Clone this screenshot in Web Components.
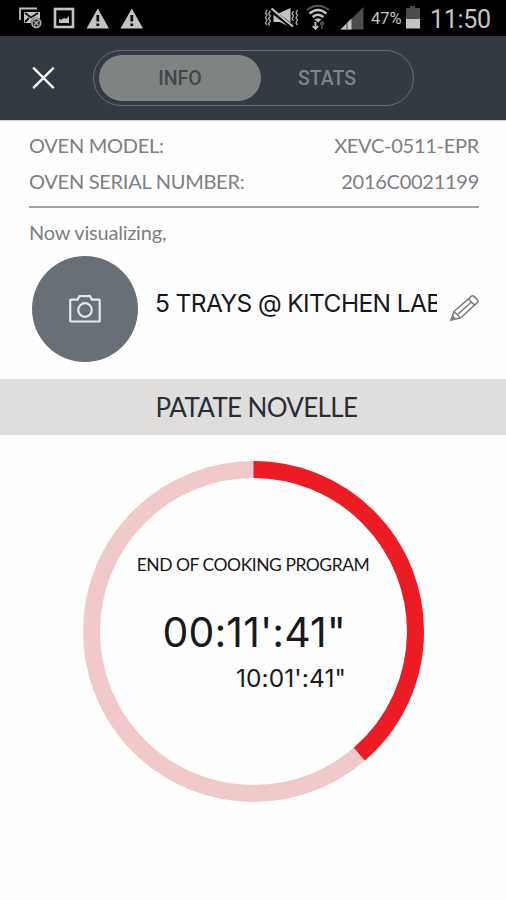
<!DOCTYPE html>
<html lang="en">
<head>
<meta charset="utf-8">
<meta name="viewport" content="width=device-width, initial-scale=1">
<title>Oven info</title>
<style>
  body {
    margin: 0;
    background: #fefefe;
    font-family: Lato, sans-serif;
  }
</style>
</head>
<body>
<oven-app></oven-app>

<script>
  function attach(element, html) {
    const template = document.createElement("template");
    template.innerHTML = html;
    element.attachShadow({ mode: "open" }).appendChild(template.content.cloneNode(true));
  }

  class StatusBar extends HTMLElement {
    constructor() {
      super();
      attach(this, `
        <style>
          :host {
            display: flex;
            justify-content: space-between;
            box-sizing: border-box;
            height: 36px;
            padding: 0 15px 0 19px;
            background: #000;
            color: #c4c4c4;
            font-family: Roboto, sans-serif;
          }
          div { display: flex; align-items: center; }
          svg { display: block; flex: none; }
          .battery { font-size: 16.5px; margin: 1px 0 0 7px; width: 34px; white-space: nowrap; }
          .clock { font-size: 25px; letter-spacing: -0.3px; margin: 2px 0 0 9px; width: 61px; white-space: nowrap; }
        </style>
        <div>
          <svg width="130" height="36" viewBox="19 0 130 36">
            <path d="M20 20V8.5h17" fill="none" stroke="#bdbdbd" stroke-width="1.8"/>
            <path d="M24 12h16v11H24z" fill="#c4c4c4"/>
            <path d="M25 13l6 4.5 7-4.5M25 22l4-4" fill="none" stroke="#111" stroke-width="1.8"/>
            <circle cx="36.3" cy="23" r="5.5" fill="#292929"/>
            <circle cx="36.3" cy="23" r="4.4" fill="#292929" stroke="#a8a8a8" stroke-width="1.6"/>
            <path d="M34 20.7l4.5 4.5m0-4.5L34 25.2" stroke="#a8a8a8" stroke-width="1.4"/>
            <rect x="55" y="9" width="18" height="18" fill="none" stroke="#c4c4c4" stroke-width="2.6"/>
            <path d="M59 23v-4l2 1 3-2 2 1 3-3v7z" fill="#c4c4c4"/>
            <path d="M97.8 8.5L109 28.5H86.5z" fill="#c4c4c4"/>
            <path d="M97.8 15v6.5m0 2v2.5" stroke="#111" stroke-width="2.8"/>
            <path d="M131.8 8.5L143 28.5h-22.5z" fill="#c4c4c4"/>
            <path d="M131.8 15v6.5m0 2v2.5" stroke="#111" stroke-width="2.8"/>
          </svg>
        </div>
        <div>
          <svg width="100" height="36" viewBox="263.5 0 100 36">
            <path d="M273 13h6l11-5v19l-11-5h-6z" fill="#c4c4c4"/>
            <path d="M271 10.5l22 17" stroke="#000" stroke-width="4.5"/>
            <path d="M271 8.5l21.5 18" stroke="#c4c4c4" stroke-width="2.2"/>
            <path d="M270 11l-2 2.5 2 2.5-2 2.5 2 2.5-2 2.5 1 2M266.5 10l-1.5 3 1.5 2-1.5 3 1.5 2-1.5 3 1.5 2M293 11l-1.5 2.5 1.5 2.5-1.5 2.5 1.5 2.5M297 10l-1.5 3 1.5 2-1.5 3 1.5 2-1.5 3 1.5 2" fill="none" stroke="#aaa" stroke-width="1.3"/>
            <path d="M306.5 10Q317.5 1.5 328.5 10" fill="none" stroke="#555" stroke-width="2"/>
            <path d="M309 13.5q8.5-7 17 0M312 17q5.5-4.5 11 0" fill="none" stroke="#c4c4c4" stroke-width="2.3"/>
            <path d="M314 19.5q3.5-2 7 0l-3.5 3z" fill="#c4c4c4"/>
            <path d="M315 22v7m-2.7-3l2.7 3 2.7-3" fill="none" stroke="#c4c4c4" stroke-width="1.8"/>
            <path d="M321.5 29v-7m-2 2.5l2-2.5 2 2.5" fill="none" stroke="#555" stroke-width="1.6"/>
            <path d="M340 29.5L363 7v22.5z" fill="#4c4c4c"/>
            <path d="M340 29.5l11-11v11z" fill="#c4c4c4"/>
            <path d="M346.5 22v7.5" stroke="#444" stroke-width="1"/>
          </svg>
          <span class="battery">47%</span>
          <svg width="16" height="36" viewBox="0 0 16 36">
            <path d="M1 8h4V6h5v2h5v11H1z" fill="#4b4b4b"/>
            <path d="M1 19h14v9.5H1z" fill="#c4c4c4"/>
          </svg>
          <span class="clock">11:50</span>
        </div>
      `);
    }
  }

  class TabSwitch extends HTMLElement {
    constructor() {
      super();
      attach(this, `
        <style>
          :host {
            display: grid;
            grid-template-columns: 162px 1fr;
            box-sizing: border-box;
            width: 321px;
            height: 56px;
            padding: 4px 4px 4px 5px;
            border: 1.5px solid #666d73;
            border-radius: 28px;
            font: 500 19.5px Roboto, sans-serif;
          }
          span { display: flex; align-items: center; justify-content: center; }
          .active { background: #7f8381; border-radius: 23px; color: #42474b; }
          .other { color: #7e8386; padding-right: 16px; }
        </style>
        <span class="active"><slot name="active"></slot></span>
        <span class="other"><slot name="other"></slot></span>
      `);
    }
  }

  class AppHeader extends HTMLElement {
    constructor() {
      super();
      attach(this, `
        <style>
          :host {
            display: flex;
            align-items: center;
            box-sizing: border-box;
            height: 84px;
            padding: 0 0 0 32px;
            background: #333a42;
          }
          svg { display: block; margin-right: 38px; }
        </style>
        <svg width="23" height="24" viewBox="0 0 23 24">
          <path d="M1.2 1.7l20.5 20.5m0-20.5L1.2 22.2" stroke="#f5f8ff" stroke-width="2.4"/>
        </svg>
        <slot></slot>
      `);
    }
  }

  class InfoRow extends HTMLElement {
    constructor() {
      super();
      attach(this, `
        <style>
          :host {
            display: flex;
            justify-content: space-between;
            height: 36px;
            line-height: 36px;
            font-size: 20px;
            letter-spacing: -0.27px;
            color: #7c7f83;
          }
        </style>
        <slot name="label"></slot>
        <slot name="value"></slot>
      `);
    }
  }

  class OvenName extends HTMLElement {
    constructor() {
      super();
      attach(this, `
        <style>
          :host { display: flex; align-items: center; height: 106px; padding-left: 3px; }
          .photo {
            display: grid;
            place-items: center;
            flex: none;
            width: 106px;
            height: 106px;
            border-radius: 50%;
            background: #696f77;
          }
          svg { display: block; flex: none; }
          .name {
            flex: none;
            width: 282px;
            margin: 0 13px 12px 17px;
            overflow: hidden;
            white-space: nowrap;
            font: 24.5px/34px Inter, sans-serif;
            letter-spacing: -0.6px;
            color: #17181a;
          }
          .edit { margin-bottom: 2px; }
        </style>
        <div class="photo">
          <svg width="32" height="28" viewBox="0 0 32 28" fill="none" stroke="#e4e7e9" stroke-width="2.2">
            <path d="M2 4.7h6.5l2-3.5h10.5l2 3.5H30q.7 0 .7.7v20.3q0 .8-.8.8H2q-.8 0-.8-.8V5.5q0-.8.8-.8z"/>
            <circle cx="16" cy="15" r="6.8"/>
          </svg>
        </div>
        <div class="name"><slot></slot></div>
        <svg class="edit" width="30" height="28" viewBox="0 0 30 28" fill="none" stroke="#7c7f82" stroke-width="1.6" stroke-linejoin="round">
          <path d="M1 26l3-8.5L21.5 2.2q1.200-1 2.500.2l3.500 3.500q1.200 1.200 0 2.500L10.500 24z"/>
          <path d="M18.500 5l6.500 6.500M4 17.500l6.500 6.500M7.500 20.500L21.500 8M1 26l2-3.500 2 2z"/>
        </svg>
      `);
    }
  }

  class ProgramTitle extends HTMLElement {
    constructor() {
      super();
      attach(this, `
        <style>
          :host {
            display: block;
            height: 56px;
            line-height: 56px;
            padding-left: 7px;
            background: #dfdedd;
            color: #292e36;
            font-size: 26px;
            letter-spacing: -0.65px;
            text-align: center;
          }
        </style>
        <slot></slot>
      `);
    }
  }

  class CookingTimer extends HTMLElement {
    constructor() {
      super();
      attach(this, `
        <style>
          :host {
            display: grid;
            width: 342px;
            height: 342px;
            color: #17191c;
          }
          svg, .text { grid-area: 1 / 1; }
          .text { display: flex; flex-direction: column; }
          .label { margin-top: 92px; text-align: center; font-size: 17.5px; line-height: 24px; letter-spacing: -0.47px; padding-right: 2px; }
          .time, .total { font-family: Inter, sans-serif; text-align: right; padding-right: 79px; white-space: nowrap; }
          .time { margin-top: 30px; font-size: 41px; line-height: 50px; letter-spacing: 0.1px; }
          .total { margin-top: 6px; font-size: 24.5px; line-height: 30px; letter-spacing: 0.1px; }
        </style>
        <svg width="342" height="342" viewBox="0 0 342 342" fill="none" stroke-width="17">
          <circle cx="170.5" cy="170.5" r="162" stroke="#f2c9cb"/>
          <circle class="progress" cx="170.5" cy="170.5" r="162" stroke="#ed1c24" pathLength="100" transform="rotate(-90 170.5 170.5)"/>
        </svg>
        <div class="text">
          <div class="label"><slot></slot></div>
          <div class="time"><slot name="time"></slot></div>
          <div class="total"><slot name="total"></slot></div>
        </div>
      `);
    }

    connectedCallback() {
      const progress = this.shadowRoot.querySelector(".progress");
      progress.setAttribute("stroke-dasharray", this.getAttribute("progress") + " 100");
    }
  }

  class OvenApp extends HTMLElement {
    constructor() {
      super();
      attach(this, `
        <style>
          :host { display: block; width: 506px; height: 900px; overflow: hidden; }
          .info { padding: 6px 27px 17px 29px; border-top: 1px solid #d3d4d8; }
          .rule { height: 2px; margin-top: 7px; background: #a0a1a3; }
          .note { height: 36px; margin: 6px 0; line-height: 36px; font-size: 20px; letter-spacing: -0.2px; color: #7c7f83; }
          cooking-timer { margin: 26px 0 0 83px; }
        </style>
        <status-bar></status-bar>
        <app-header>
          <tab-switch>
            <span slot="active">INFO</span>
            <span slot="other">STATS</span>
          </tab-switch>
        </app-header>
        <div class="info">
          <info-row>
            <span slot="label">OVEN MODEL:</span>
            <span slot="value">XEVC-0511-EPR</span>
          </info-row>
          <info-row>
            <span slot="label">OVEN SERIAL NUMBER:</span>
            <span slot="value">2016C0021199</span>
          </info-row>
          <div class="rule"></div>
          <div class="note">Now visualizing,</div>
          <oven-name>5 TRAYS @ KITCHEN LAB</oven-name>
        </div>
        <program-title>PATATE NOVELLE</program-title>
        <cooking-timer progress="38.67">
          END OF COOKING PROGRAM
          <span slot="time">00:11':41"</span>
          <span slot="total">10:01':41"</span>
        </cooking-timer>
      `);
    }
  }

  customElements.define("status-bar", StatusBar);
  customElements.define("tab-switch", TabSwitch);
  customElements.define("app-header", AppHeader);
  customElements.define("info-row", InfoRow);
  customElements.define("oven-name", OvenName);
  customElements.define("program-title", ProgramTitle);
  customElements.define("cooking-timer", CookingTimer);
  customElements.define("oven-app", OvenApp);
</script>
</body>
</html>
